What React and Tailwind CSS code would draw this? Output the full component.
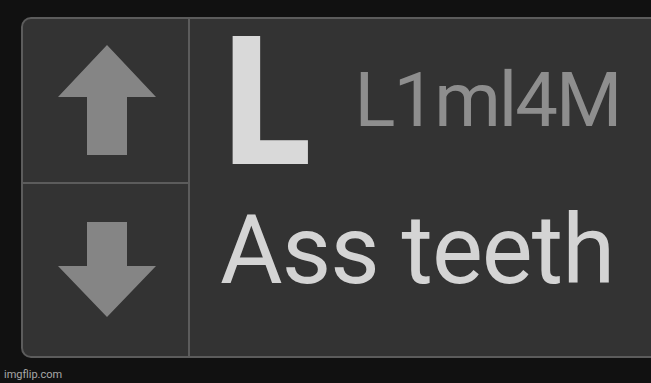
const ArrowUp = () => (
  <svg width="164" height="164" viewBox="0 0 164 164" className="block">
    <polygon points="84,26 133,78 104,78 104,136 64,136 64,78 35,78" fill="#858585" />
  </svg>
);

const ArrowDown = () => (
  <svg width="164" height="171" viewBox="0 0 164 171" className="block">
    <polygon points="64,38 104,38 104,82 133,82 84,133 35,82 64,82" fill="#858585" />
  </svg>
);

export default function App() {
  return (
    <div className="relative w-[651px] h-[383px] overflow-hidden bg-[#111111] pt-[17px] pl-[21px] font-['Roboto',sans-serif]">
      {/* vote card */}
      <div className="flex w-[660px] h-[341px] rounded-[10px] border-2 border-[#5c5c5c] bg-[#333333]">
        <div className="flex w-[167px] shrink-0 flex-col border-r-2 border-[#5c5c5c]">
          <div className="h-[165px] border-b-2 border-[#5c5c5c]">
            <ArrowUp />
          </div>
          <div className="flex-1">
            <ArrowDown />
          </div>
        </div>

        <div className="flex flex-col pl-[34px]">
          <div className="flex items-start">
            <span className="-mt-[22px] inline-block origin-left scale-x-[0.89] text-[180px] font-black leading-[211px] text-[#d9d9d9]">L</span>
            <span className="ml-[33px] mt-[43px] text-[76px] leading-none tracking-[-2px] text-[#8e8e8e]">L1ml4M</span>
          </div>
          <div className="-ml-[4px] -mt-[6px] text-[96px] leading-none tracking-[-1px] text-[#d4d4d4] whitespace-nowrap">
            Ass teeth
          </div>
        </div>
      </div>

      <div className="absolute bottom-[3px] left-[4px] text-[11px] leading-none text-[#a8a8a8]">imgflip.com</div>
    </div>
  );
}
